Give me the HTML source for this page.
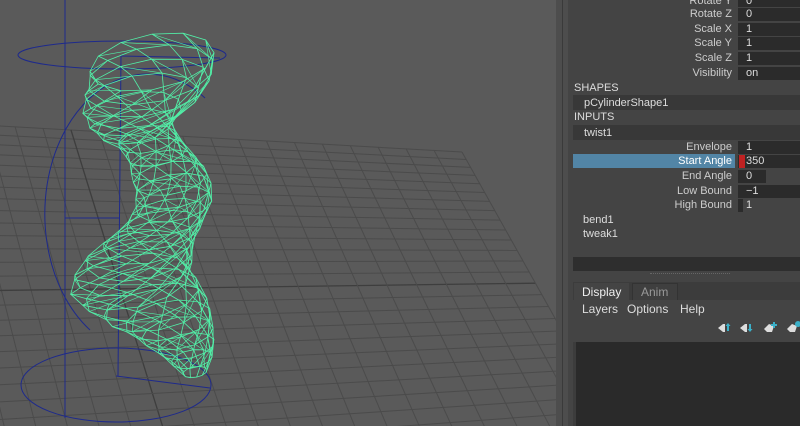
<!DOCTYPE html>
<html><head><meta charset="utf-8"><style>
html,body{margin:0;padding:0;width:800px;height:426px;overflow:hidden;background:#444;font-family:"Liberation Sans",sans-serif;}
svg{display:block}
#vp{position:absolute;left:0;top:0;width:556px;height:426px;background:#5a5a5a;overflow:hidden}
#sep{position:absolute;left:556px;top:0;width:12px;height:426px;background:#4d4d4d;}
#sep:before{content:"";position:absolute;left:6px;top:0;width:1px;height:426px;background:#3a3a3a;}
#pn{position:absolute;left:568px;top:0;width:232px;height:426px;background:#444;color:#ddd;font-size:11px;overflow:hidden}
.t{position:absolute;white-space:nowrap;}
.lab{position:absolute;right:68px;text-align:right;color:#ccc;}
.fld{position:absolute;left:170px;width:62px;height:13px;background:#2b2b2b;}
.fv{position:absolute;left:178px;color:#ddd;}
.bar{position:absolute;left:5px;width:227px;height:15px;background:#383838;}
</style></head><body>
<div id="vp"><svg id="sv" width="556" height="426" xmlns="http://www.w3.org/2000/svg"></svg></div>
<div id="sep"></div>
<div id="pn">
<div class="lab" style="top:-5px">Rotate Y</div><div class="fld" style="top:0px;height:7px"></div><div class="fv t" style="top:-5px">0</div>
<div class="lab" style="top:8px">Rotate Z</div><div class="fld" style="top:8px"></div><div class="fv t" style="top:8px">0</div>
<div class="lab" style="top:23px">Scale X</div><div class="fld" style="top:23px"></div><div class="fv t" style="top:23px">1</div>
<div class="lab" style="top:37px">Scale Y</div><div class="fld" style="top:37px"></div><div class="fv t" style="top:37px">1</div>
<div class="lab" style="top:52px">Scale Z</div><div class="fld" style="top:52px"></div><div class="fv t" style="top:52px">1</div>
<div class="lab" style="top:67px">Visibility</div><div class="fld" style="top:67px"></div><div class="fv t" style="top:67px">on</div>
<div class="t" style="left:6px;top:82px;color:#ddd">SHAPES</div>
<div class="bar" style="top:95px"></div><div class="t" style="left:16px;top:97px">pCylinderShape1</div>
<div class="t" style="left:6px;top:111px;color:#ddd">INPUTS</div>
<div class="bar" style="top:125px"></div><div class="t" style="left:16px;top:127px">twist1</div>
<div class="lab" style="top:141px">Envelope</div><div class="fld" style="top:141px"></div><div class="fv t" style="top:141px">1</div>
<div style="position:absolute;left:5px;top:154px;width:162px;height:14px;background:#5285a6"></div>
<div class="lab" style="top:155px;color:#fff">Start Angle</div>
<div class="fld" style="top:155px"></div><div style="position:absolute;left:171px;top:155px;width:6px;height:13px;background:#c02222"></div><div class="fv t" style="top:155px">350</div>
<div class="lab" style="top:170px">End Angle</div><div class="fld" style="top:170px;width:28px"></div><div class="fv t" style="top:170px">0</div>
<div class="lab" style="top:185px">Low Bound</div><div class="fld" style="top:185px"></div><div class="fv t" style="top:185px">−1</div>
<div class="lab" style="top:199px">High Bound</div><div class="fld" style="top:199px;width:5px"></div><div class="fv t" style="top:199px">1</div>
<div class="t" style="left:15px;top:214px">bend1</div>
<div class="t" style="left:15px;top:228px">tweak1</div>
<div style="position:absolute;left:5px;top:257px;width:227px;height:14px;background:#2e2e2e"></div>
<div style="position:absolute;left:82px;top:273px;width:80px;border-top:1px dotted #666"></div>
<div style="position:absolute;left:5px;top:282px;width:227px;height:144px;background:#3c3c3c"></div>
<div style="position:absolute;left:6px;top:283px;width:55px;height:17px;background:#444"></div>
<div style="position:absolute;left:64px;top:283px;width:44px;height:16px;background:#3f3f3f;border:1px solid #333;border-bottom:none"></div>
<div class="t" style="left:14px;top:285px;color:#eee;font-size:12px">Display</div>
<div class="t" style="left:73px;top:285px;color:#999;font-size:12px">Anim</div>
<div style="position:absolute;left:5px;top:300px;width:227px;height:42px;background:#444"></div>
<div class="t" style="left:14px;top:302px;font-size:12px">Layers</div>
<div class="t" style="left:59px;top:302px;font-size:12px">Options</div>
<div class="t" style="left:112px;top:302px;font-size:12px">Help</div>
<svg style="position:absolute;left:148px;top:320px" width="84" height="16">
<g fill="#ddd"><path d="M2 8 L7 4 L9 4 L9 12 L7 12Z"/><path d="M24 8 L29 4 L31 4 L31 12 L29 12Z"/><path d="M48 9 L53 4 L58 6 L56 12 L51 12Z"/><path d="M71 9 L76 4 L81 6 L79 12 L74 12Z"/></g>
<g fill="#3bb0c8"><path d="M11 11 V6 H9.5 L12 3 L14.5 6 H13 V11Z"/><path d="M33 4 V9 H31.5 L34 12 L36.5 9 H35 V4Z"/><rect x="57" y="2" width="2" height="6"/><rect x="55" y="4" width="6" height="2"/><circle cx="82" cy="4" r="3"/></g>
</svg>
<div style="position:absolute;left:8px;top:342px;width:224px;height:84px;background:#2a2a2a"></div>
</div>
<script>
var s=document.getElementById('sv'),h='';
function L(a,b,c,d,col,w){h+='<line x1="'+a+'" y1="'+b+'" x2="'+c+'" y2="'+d+'" stroke="'+col+'" stroke-width="'+(w||1)+'"/>';}
var FL=[-320,108],FR=[462,152],NR=[640,470],NL=[-260,560];
function P(u,v){var x1=FL[0]+(FR[0]-FL[0])*u,y1=FL[1]+(FR[1]-FL[1])*u,x2=NL[0]+(NR[0]-NL[0])*u,y2=NL[1]+(NR[1]-NL[1])*u;
 var vv=v*v*0.35+v*0.65;return [x1+(x2-x1)*vv,y1+(y2-y1)*vv];}
var N=28;
for(var i=0;i<=N;i++){var a=P(i/N,0),b=P(i/N,1);L(a[0],a[1],b[0],b[1],i==14?'#3e3e3e':'#4b4b4b',i==14?1.3:1);
 var c=P(0,i/N),d=P(1,i/N);L(c[0],c[1],d[0],d[1],i==14?'#3e3e3e':'#4b4b4b',i==14?1.3:1);}
var B='#1e2a8c';
h+='<ellipse cx="122" cy="55" rx="104" ry="14" fill="none" stroke="'+B+'"/>';
h+='<ellipse cx="116" cy="385" rx="95" ry="37" fill="none" stroke="'+B+'"/>';
h+='<path d="M205 98 A88 120 0 0 0 90 330" fill="none" stroke="'+B+'"/>';
L(65,0,65,418,B);L(121,56,118,376,B);L(65,218,120,218,B);L(116,376,210,388,B);L(121,56,220,58,B);
var G='#52f0a8';
var prof=[[0,152,62],[20,150,64],[40,140,58],[60,130,40],[80,150,28],[100,162,32],[120,172,38],[140,175,38],[160,165,40],[180,150,45],[200,135,58],[220,130,60],[240,150,55],[260,170,42],[290,190,25],[310,195,12]];
function prf(t){for(var k=0;k<prof.length-1;k++){if(t<=prof[k+1][0]){var f=(t-prof[k][0])/(prof[k+1][0]-prof[k][0]);return [prof[k][1]+(prof[k+1][1]-prof[k][1])*f,prof[k][2]+(prof[k+1][2]-prof[k][2])*f];}}return [prof[prof.length-1][1],prof[prof.length-1][2]];}
var rings=[],R=24,S=12;
for(var r=0;r<=R;r++){var t=r/R*310,p=prf(t),y=62+t,tw=r*0.3,ring=[];
 for(var k=0;k<S;k++){var an=k/S*Math.PI*2+tw;ring.push([p[0]+Math.cos(an)*p[1],y+Math.sin(an)*p[1]*0.45-Math.cos(an)*p[1]*0.15]);}rings.push(ring);}
for(var r=0;r<=R;r++){var pts=rings[r].map(function(q){return q[0].toFixed(1)+','+q[1].toFixed(1)}).join(' ');h+='<polygon points="'+pts+'" fill="none" stroke="'+G+'" stroke-width="0.8"/>';}
for(var k=0;k<S;k++){var pts=[];for(var r=0;r<=R;r++)pts.push(rings[r][k][0].toFixed(1)+','+rings[r][k][1].toFixed(1));h+='<polyline points="'+pts.join(' ')+'" fill="none" stroke="'+G+'" stroke-width="0.8"/>';
 for(var r=0;r<R;r+=2){var a=rings[r][k],b=rings[r+1][(k+1)%S];L(a[0],a[1],b[0],b[1],G,0.6);}}
s.innerHTML=h;
</script>
</body></html>
